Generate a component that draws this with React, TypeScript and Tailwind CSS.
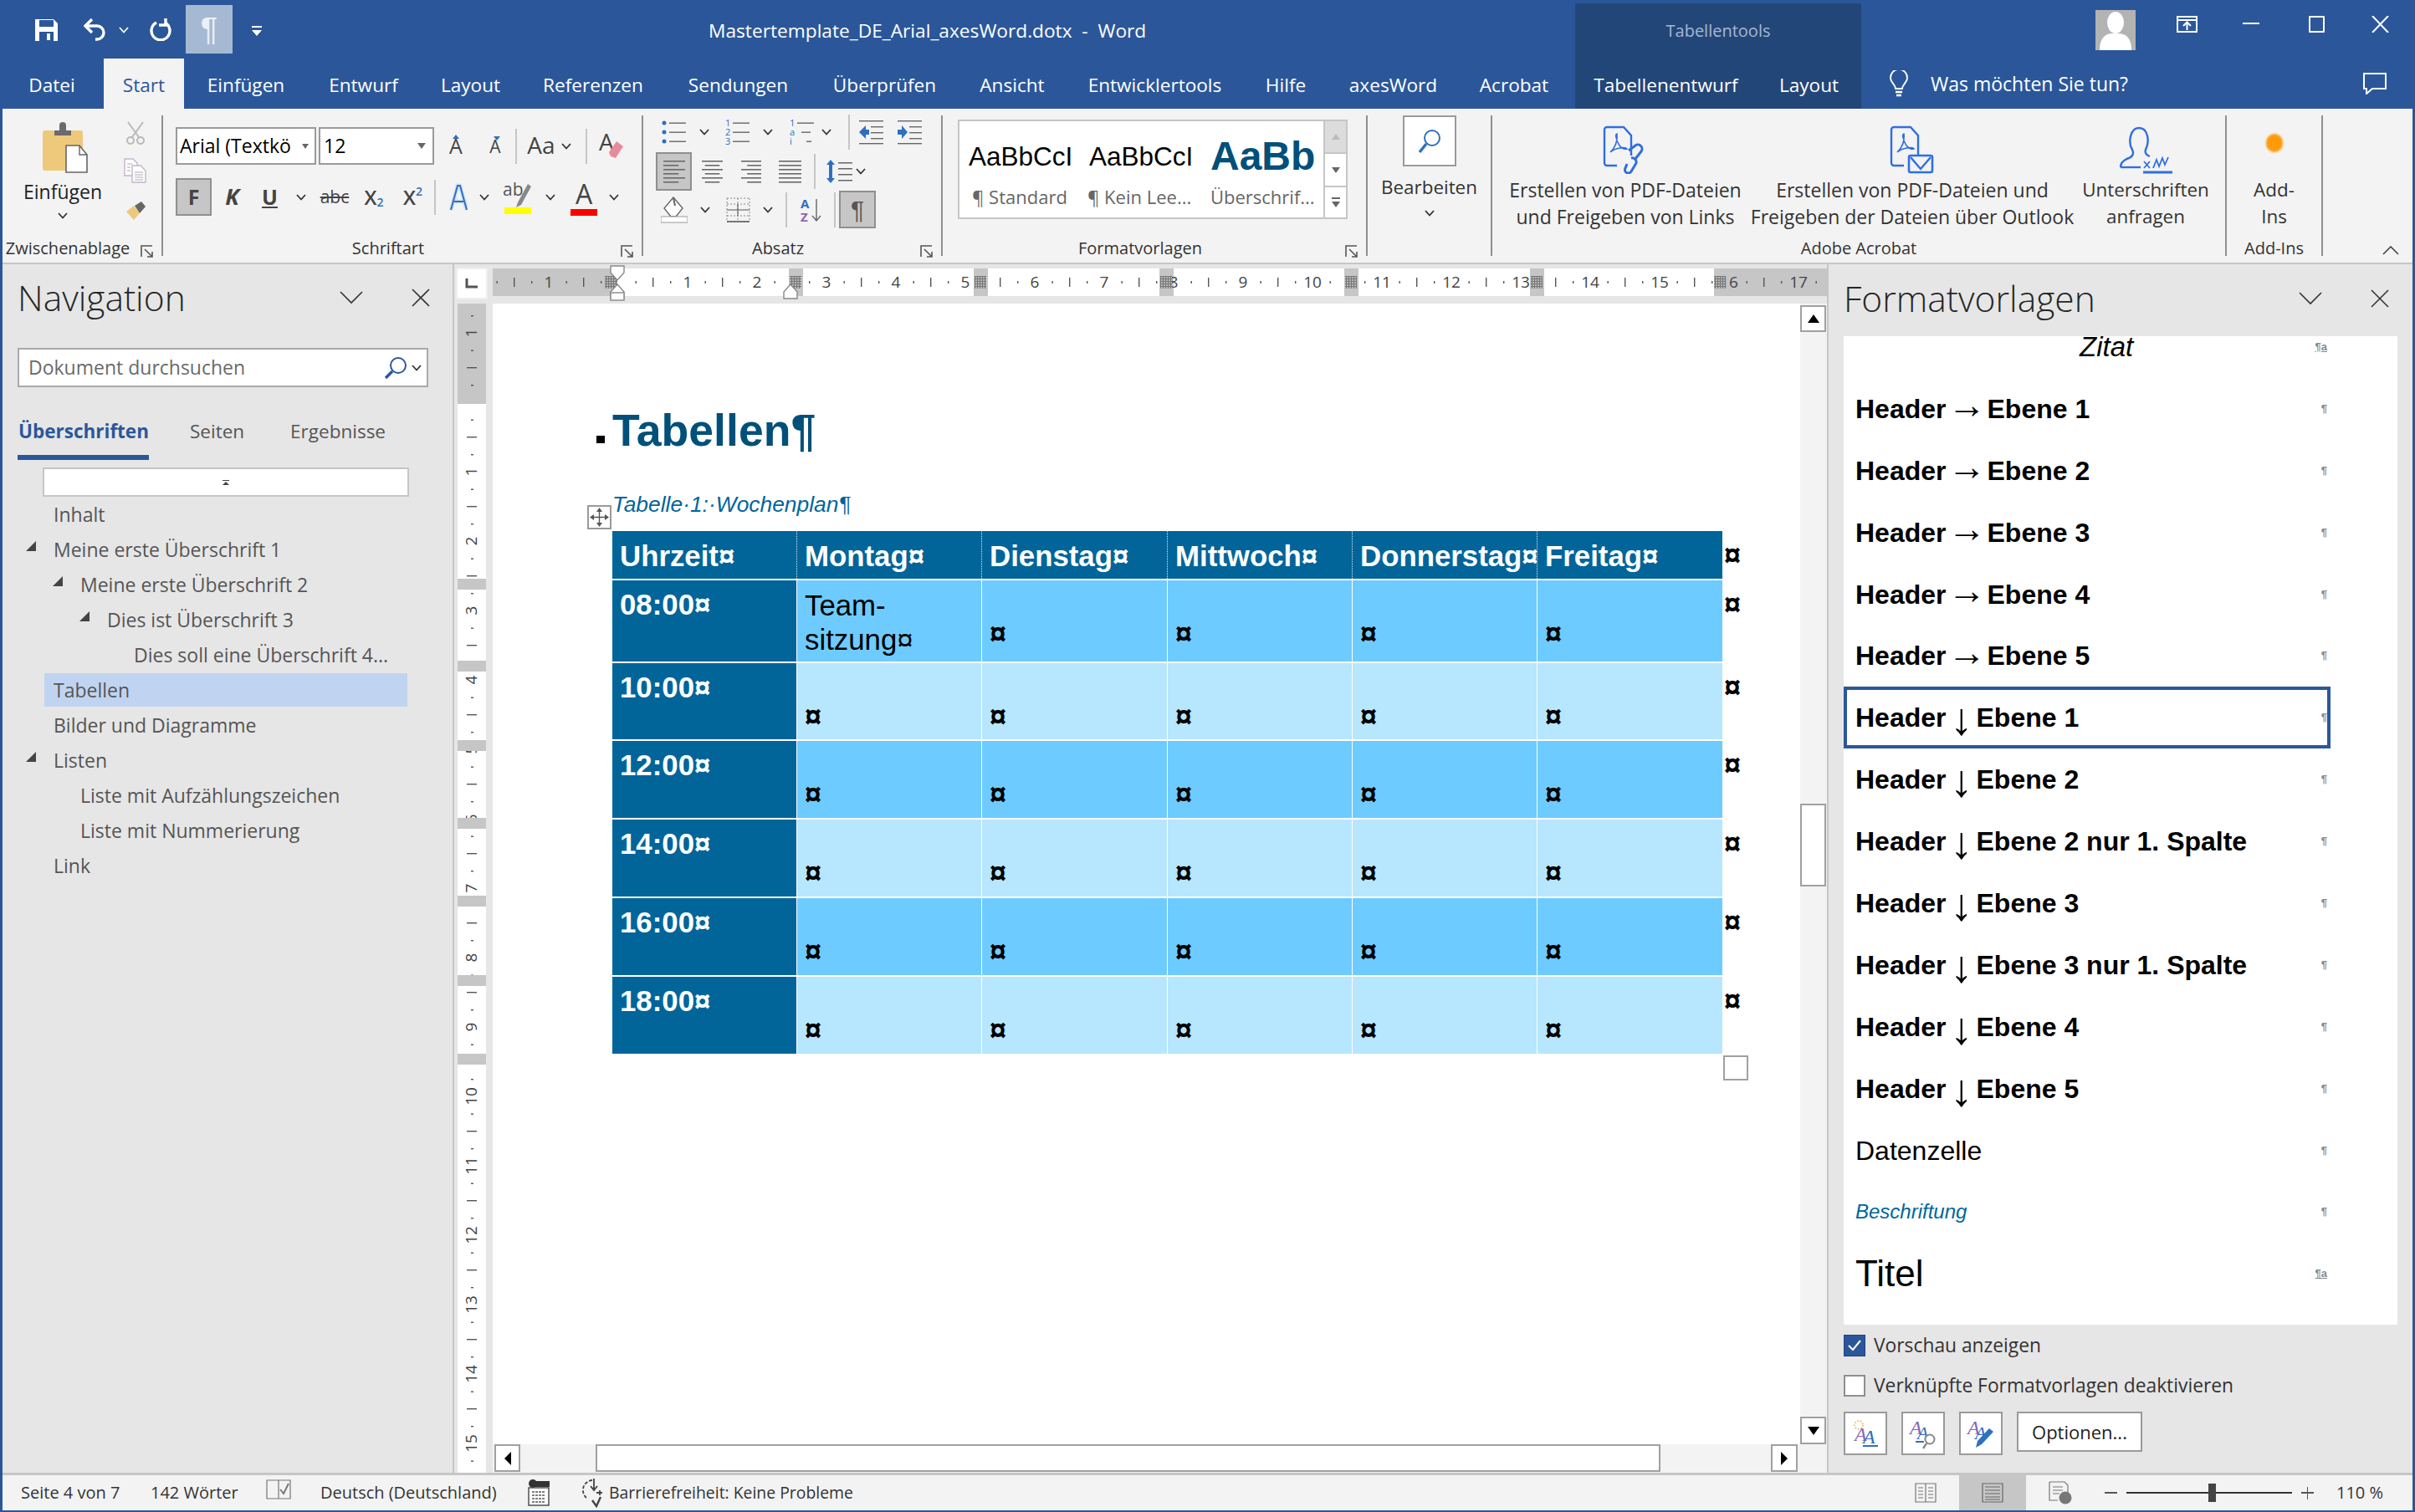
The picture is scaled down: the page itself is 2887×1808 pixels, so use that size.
import React from "react";

const BLUE = "#2b579a";

function Chev({ className = "" }: { className?: string }) {
  return (
    <svg className={`shrink-0 ${className}`} width="12" height="8" viewBox="0 0 12 8">
      <polyline points="1,1 6,6.5 11,1" fill="none" stroke="#333" strokeWidth="1.8" />
    </svg>
  );
}

function Launcher() {
  return (
    <svg width="16" height="16" viewBox="0 0 16 16">
      <path d="M1 14V1h13" fill="none" stroke="#555" strokeWidth="1.6" />
      <path d="M5 5l9 9M14 8v6H8" fill="none" stroke="#555" strokeWidth="1.6" />
    </svg>
  );
}

function Lines({ w, kind }: { w: number; kind: "l" | "c" | "r" | "j" }) {
  const rows = [0, 1, 2, 3, 4, 5];
  const sizes = [1, 0.7, 1, 0.7, 1, 0.7];
  return (
    <svg width={w} height="28" viewBox={`0 0 ${w} 28`}>
      {rows.map((r) => {
        const len = kind === "j" ? w : w * sizes[r];
        const x = kind === "l" || kind === "j" ? 0 : kind === "c" ? (w - len) / 2 : w - len;
        return <rect key={r} x={x} y={1 + r * 5} width={len} height="1.6" fill="#6a6a6a" />;
      })}
    </svg>
  );
}

function PdfIcon({ extra }: { extra: "link" | "mail" }) {
  return (
    <svg width="56" height="58" viewBox="0 0 56 58" fill="none" stroke="#2f6fe0" strokeWidth="2.4">
      <path d="M18 48H6a3 3 0 0 1-3-3V5a3 3 0 0 1 3-3h20l9 10v24" />
      <path d="M10 32c6-5 9-14 8-22-2 0-2 6 3 14 2 3 6 5 9 4-2-3-14-1-20 4z" strokeWidth="1.6" />
      {extra === "link" ? (
        <g strokeWidth="3">
          <path d="M32 30l8-6a5 5 0 0 1 7 7l-7 9" />
          <path d="M30 46l-2 5a4 4 0 0 0 7 4l6-10a5 5 0 0 0-6-6" />
        </g>
      ) : (
        <g>
          <rect x="24" y="36" width="28" height="20" rx="2" strokeWidth="2.6" />
          <path d="M26 38l12 14 12-14" />
        </g>
      )}
    </svg>
  );
}

function SignIcon() {
  return (
    <svg width="66" height="58" viewBox="0 0 66 58" fill="none" stroke="#2f6fe0" strokeWidth="2.4">
      <path d="M3 50c0-5 4-9 10-11 5-2 6-6 4-10-5-8-3-26 8-26s13 16 8 26c-1 3 0 6 5 8" />
      <path d="M3 50h24" />
      <path d="M31 43l7 8M38 43l-7 8M42 51l4-10 3 8 4-10 3 8 4-9" strokeWidth="1.8" />
      <path d="M30 56h35" strokeWidth="3" />
    </svg>
  );
}

function Paste() {
  return (
    <svg width="56" height="62" viewBox="0 0 56 62">
      <rect x="0" y="10" width="48" height="48" rx="3" fill="#eec97c" />
      <path d="M14 10h6V4a4 4 0 0 1 8 0v6h6v6H14z" fill="#6b6b6b" />
      <path d="M28 28h16l9 11v21H28z" fill="#fff" stroke="#666" strokeWidth="1.6" />
      <path d="M44 28v11h9" fill="none" stroke="#666" strokeWidth="1.4" />
    </svg>
  );
}

function Doc2() {
  return (
    <svg width="28" height="30" viewBox="0 0 28 30" fill="#fff" stroke="#c2b4d0" strokeWidth="1.4">
      <path d="M1 1h10l5 5v15H1z" />
      <path d="M10 9h10l6 6v14H10z" />
      <path d="M4 7h6M4 11h4M4 15h4M13 17h10M13 20h10M13 23h10M13 26h10" strokeWidth="1" stroke="#aaa" />
    </svg>
  );
}

function BigX() {
  return (
    <svg width="22" height="22" viewBox="0 0 22 22">
      <path d="M1 1l20 20M21 1L1 21" stroke="#333" strokeWidth="1.6" fill="none" />
    </svg>
  );
}

function BigChev() {
  return (
    <svg width="28" height="16" viewBox="0 0 28 16">
      <polyline points="1,1 14,14 27,1" fill="none" stroke="#333" strokeWidth="1.6" />
    </svg>
  );
}

function Tri() {
  return (
    <svg width="12" height="12" viewBox="0 0 12 12" className="shrink-0">
      <polygon points="12,0 12,12 0,12" fill="#444" />
    </svg>
  );
}

function Sep({ h, cls = "" }: { h: string; cls?: string }) {
  return <div className={`w-[2px] bg-[#c6c6c6] shrink-0 ${h} ${cls}`} />;
}

function GroupSep() {
  return <div className="w-[2px] h-[168px] mt-[8px] bg-[#8f8f8f] shrink-0" />;
}

function Group({ w, label, launcher, children }: { w: string; label: string; launcher?: boolean; children: React.ReactNode }) {
  return (
    <div className={`${w} shrink-0 flex flex-col h-full`}>
      <div className="h-[150px]">{children}</div>
      <div className="h-[34px] flex items-center text-[20px] text-[#333]">
        <div className="flex-1 text-center whitespace-nowrap">{label}</div>
        {launcher && (
          <div className="w-[34px] flex justify-center pt-[8px]">
            <Launcher />
          </div>
        )}
      </div>
    </div>
  );
}

function BigAction({ w, icon, lines, size }: { w: string; icon: React.ReactNode; lines: string[]; size: string }) {
  return (
    <div className={`${w} shrink-0 flex flex-col items-center pt-[20px]`}>
      <div className="h-[61px] flex items-start justify-center">{icon}</div>
      <div className={`text-center ${size} leading-[32px] text-[#333] whitespace-nowrap`}>
        {lines.map((l) => (
          <div key={l}>{l}</div>
        ))}
      </div>
    </div>
  );
}

function Clipboard() {
  return (
    <div className="flex">
      <div className="w-[144px] flex flex-col items-center pt-[16px]">
        <div className="ml-[8px]">
          <Paste />
        </div>
        <div className="text-[23px] text-[#222] mt-[6px] leading-[30px]">Einfügen</div>
        <Chev className="mt-[10px]" />
      </div>
      <div className="w-[30px] flex flex-col items-center pt-[15px]">
        <svg width="26" height="28" viewBox="0 0 26 28" fill="none" stroke="#b9b9b9" strokeWidth="2">
          <path d="M4 1l13 18M22 1L9 19" />
          <circle cx="7" cy="23" r="4" />
          <circle cx="19" cy="23" r="4" />
        </svg>
        <div className="mt-[16px]">
          <Doc2 />
        </div>
        <svg className="mt-[21px]" width="26" height="24" viewBox="0 0 26 24">
          <path d="M2 13l9-7 7 9-7 8z" fill="#eec97c" />
          <path d="M12 6l8-5 5 6-7 8z" fill="#666" />
        </svg>
      </div>
    </div>
  );
}

function FontGroup() {
  const slot = "flex items-center justify-center shrink-0";
  return (
    <div className="pl-[15px] pt-[22px] text-[#444]">
      <div className="flex items-center h-[45px]">
        <div className="w-[168px] h-[45px] border-2 border-[#9a9a9a] bg-white flex items-center justify-between pl-[3px] pr-[7px] text-[23px] text-black shrink-0">
          <span className="whitespace-nowrap">Arial (Textkö</span>
          <span className="w-0 h-0 border-x-[4px] border-x-transparent border-t-[6px] border-t-[#666] shrink-0 ml-[2px]" />
        </div>
        <div className="w-[138px] h-[45px] ml-[3px] border-2 border-[#9a9a9a] bg-white flex items-center justify-between pl-[4px] pr-[8px] text-[23px] text-black shrink-0">
          <span>12</span>
          <span className="w-0 h-0 border-x-[5px] border-x-transparent border-t-[7px] border-t-[#666]" />
        </div>
        <div className={`${slot} w-[52px] relative text-[25px]`}>
          A<span className="absolute top-[5px] left-[22px] w-0 h-0 border-x-[4px] border-x-transparent border-b-[5px] border-b-[#2f6fbf]" />
        </div>
        <div className={`${slot} w-[42px] relative text-[21px] pt-[2px]`}>
          A<span className="absolute top-[5px] left-[19px] w-0 h-0 border-x-[4px] border-x-transparent border-t-[5px] border-t-[#2f6fbf]" />
        </div>
        <div className={`${slot} w-[8px]`}><Sep h="h-[42px]" /></div>
        <div className={`${slot} w-[52px] text-[28px] pb-[4px]`}>Aa</div>
        <div className={`${slot} w-[8px]`}><Chev /></div>
        <div className="w-[16px] shrink-0" />
        <div className={`${slot} w-[8px]`}><Sep h="h-[42px]" /></div>
        <div className={`${slot} w-[52px]`}>
          <svg className="overflow-visible" width="30" height="34" viewBox="0 0 30 34">
            <text x="0" y="22" fontFamily="Open Sans" fontSize="28" fill="#444">A</text>
            <path d="M12 24l9-13 8 6-9 14-6-2z" fill="#e98a9b" />
          </svg>
        </div>
      </div>
      <div className="flex items-center h-[45px] mt-[16px]">
        <div className={`${slot} w-[43px] h-[45px] bg-[#c6c6c6] border-2 border-[#8f8f8f] text-[25px] font-bold text-[#444]`}>F</div>
        <div className={`${slot} w-[49px] text-[27px] font-bold italic`}>K</div>
        <div className={`${slot} w-[41px] text-[25px] font-bold underline`}>U</div>
        <div className={`${slot} w-[34px]`}><Chev /></div>
        <div className={`${slot} w-[46px] text-[21px] line-through`}>abc</div>
        <div className={`${slot} w-[48px] text-[24px] font-semibold`}>X<span className="text-[14px] text-[#2f6fbf] mt-[12px]">2</span></div>
        <div className={`${slot} w-[45px] text-[24px] font-semibold`}>X<span className="text-[14px] text-[#2f6fbf] mb-[14px]">2</span></div>
        <div className={`${slot} w-[8px]`}><Sep h="h-[42px]" /></div>
        <div className={`${slot} w-[48px]`}>
          <svg width="22" height="34" viewBox="0 0 22 34" fill="none">
            <path d="M2 32L10 3h3l8 29M6 22h11" stroke="#cfe2f8" strokeWidth="5" />
            <path d="M2 32L10 3h3l8 29M6 22h11" stroke="#2f6fbf" strokeWidth="2" />
          </svg>
        </div>
        <div className={`${slot} w-[14px]`}><Chev /></div>
        <div className={`${slot} w-[64px]`}>
          <svg className="overflow-visible" width="34" height="44" viewBox="0 0 34 44">
            <text x="0" y="20" fontFamily="Open Sans" fontSize="21" fill="#555">ab</text>
            <path d="M18 28l12-22 4 3-12 22-6 3z" fill="#888" />
            <rect x="2" y="34" width="32" height="8" fill="#ffff00" />
          </svg>
        </div>
        <div className={`${slot} w-[16px]`}><Chev /></div>
        <div className={`${slot} w-[64px] flex-col text-[32px]`}>
          <span className="leading-[36px]">A</span>
          <span className="w-[32px] h-[8px] bg-[#ff0000]" />
        </div>
        <div className={`${slot} w-[8px]`}><Chev /></div>
      </div>
    </div>
  );
}

function Bullets({ kind }: { kind: "b" | "n" | "m" }) {
  const c = "#2f6fbf";
  return (
    <svg width="30" height="30" viewBox="0 0 30 30" className="shrink-0 overflow-visible">
      {kind === "b" && (
        <g>
          <circle cx="3" cy="4" r="2.5" fill={c} />
          <circle cx="3" cy="15" r="2.5" fill={c} />
          <circle cx="3" cy="26" r="2.5" fill={c} />
        </g>
      )}
      {kind !== "b" && (
        <g fontFamily="Open Sans" fontSize="11" fill={c}>
          <text x="0" y="8">1</text>
          <text x="0" y="19">{kind === "n" ? "2" : "a"}</text>
          <text x="0" y="30">{kind === "n" ? "3" : "i"}</text>
        </g>
      )}
      <rect x="9" y="3.5" width="20" height="1.4" fill="#666" />
      <rect x={kind === "m" ? 14 : 9} y="14.5" width={kind === "m" ? 11 : 20} height="1.4" fill="#666" />
      <rect x={kind === "m" ? 20 : 9} y="25.5" width={kind === "m" ? 6 : 20} height="1.4" fill="#666" />
    </svg>
  );
}

function IndentIcon({ dir }: { dir: "l" | "r" }) {
  return (
    <svg width="29" height="30" viewBox="0 0 29 30" className="shrink-0">
      {[1, 8, 15, 22, 28].map((y) => (
        <rect key={y} x={y === 1 || y === 28 ? 0 : 14} y={y} width={y === 1 || y === 28 ? 29 : 15} height="1.4" fill="#666" />
      ))}
      {dir === "l" ? <path d="M0 15l8-8v5h4v6H8v5z" fill="#2f6fbf" /> : <path d="M12 15l-7-8v5H0v6h5v5z" fill="#2f6fbf" />}
    </svg>
  );
}

function Paragraph() {
  return (
    <div className="pt-[13px]">
      <div className="flex items-center h-[30px]">
        <div className="ml-[22px]"><Bullets kind="b" /></div>
        <Chev className="ml-[15px]" />
        <div className="ml-[19px]"><Bullets kind="n" /></div>
        <Chev className="ml-[15px]" />
        <div className="ml-[20px]"><Bullets kind="m" /></div>
        <Chev className="ml-[8px]" />
        <Sep h="h-[42px]" cls="ml-[20px]" />
        <div className="ml-[11px]"><IndentIcon dir="l" /></div>
        <div className="ml-[17px]"><IndentIcon dir="r" /></div>
      </div>
      <div className="flex items-center h-[46px] mt-[9px]">
        <div className="ml-[15px] w-[43px] h-[46px] bg-[#c6c6c6] border-2 border-[#8f8f8f] flex items-center justify-center shrink-0">
          <Lines w={26} kind="l" />
        </div>
        <div className="ml-[12px]"><Lines w={25} kind="c" /></div>
        <div className="ml-[22px]"><Lines w={24} kind="r" /></div>
        <div className="ml-[21px]"><Lines w={27} kind="j" /></div>
        <Sep h="h-[42px]" cls="ml-[15px]" />
        <svg className="ml-[12px] shrink-0" width="32" height="30" viewBox="0 0 32 30">
          <path d="M6 1l5 6H8v16h3l-5 6-5-6h3V7H1z" fill="#2f6fbf" />
          {[4, 11, 18, 25].map((y) => (
            <rect key={y} x="15" y={y} width="17" height="1.5" fill="#666" />
          ))}
        </svg>
        <Chev className="ml-[4px]" />
      </div>
      <div className="flex items-center h-[45px]">
        <svg className="ml-[21px] shrink-0" width="32" height="32" viewBox="0 0 32 32">
          <path d="M15 1l11 13-8 10H12L4 14z" fill="#fff" stroke="#666" strokeWidth="1.4" />
          <path d="M15 2l2 9" stroke="#666" strokeWidth="2" />
          <rect x="0" y="24" width="32" height="7" fill="#fff" stroke="#999" />
        </svg>
        <Chev className="ml-[15px]" />
        <svg className="ml-[19px] shrink-0" width="29" height="30" viewBox="0 0 29 30">
          <path d="M1 1h27M1 8h27M1 22h27M1 29h27M1 1v28M14 1v28M28 1v28" stroke="#888" strokeWidth="1" strokeDasharray="2 2" fill="none" />
          <path d="M1 15h27M14 8v14" stroke="#555" strokeWidth="1" />
          <path d="M1 29h27" stroke="#555" strokeWidth="1.5" />
        </svg>
        <Chev className="ml-[15px]" />
        <Sep h="h-[42px]" cls="ml-[15px]" />
        <svg className="ml-[16px] shrink-0 overflow-visible" width="26" height="30" viewBox="0 0 26 30">
          <text x="0" y="13" fontFamily="Open Sans" fontWeight="700" fontSize="15" fill="#2f6fbf">A</text>
          <text x="0" y="29" fontFamily="Open Sans" fontWeight="700" fontSize="15" fill="#8e63b8">Z</text>
          <path d="M19 2v26M14 22l5 6 5-6" stroke="#666" strokeWidth="1.4" fill="none" />
        </svg>
        <Sep h="h-[42px]" cls="ml-[14px]" />
        <div className="ml-[4px] w-[44px] h-[45px] bg-[#c6c6c6] border-2 border-[#8f8f8f] text-[30px] text-[#555] flex items-center justify-center shrink-0 font-['Liberation_Sans',sans-serif]">¶</div>
      </div>
    </div>
  );
}

function Gallery() {
  const sty = "font-['Liberation_Sans',Arial,sans-serif] text-black whitespace-nowrap overflow-hidden";
  return (
    <div className="ml-[18px] mt-[13px] w-[466px] h-[119px] border-2 border-[#c6c6c6] bg-white flex">
      <div className="flex-1 flex">
        <div className="w-[136px] flex flex-col pl-[11px] shrink-0">
          <div className={`${sty} h-[72px] pt-[12px] leading-[60px] text-[31.5px]`}>AaBbCcI</div>
          <div className="text-[22px] text-[#666] pl-[4px] mt-[2px] whitespace-nowrap">¶ Standard</div>
        </div>
        <div className="w-[144px] flex flex-col pl-[19px] shrink-0">
          <div className={`${sty} h-[72px] pt-[12px] leading-[60px] text-[31.5px]`}>AaBbCcI</div>
          <div className="text-[22px] text-[#666] -ml-[2px] mt-[2px] whitespace-nowrap">¶ Kein Lee...</div>
        </div>
        <div className="flex-1 flex flex-col pl-[20px]">
          <div className={`${sty} h-[72px] pt-[12px] leading-[60px] text-[48px] font-bold !text-[#00507a]`}>AaBb</div>
          <div className="text-[22px] text-[#666] mt-[2px] whitespace-nowrap">Überschrif...</div>
        </div>
      </div>
      <div className="w-[29px] flex flex-col shrink-0 -mt-[2px] -mb-[2px] -mr-[2px]">
        <div className="h-[41px] bg-[#dcdcdc] border-2 border-[#c6c6c6] flex items-center justify-center">
          <span className="w-0 h-0 border-x-[5px] border-x-transparent border-b-[7px] border-b-[#bbb]" />
        </div>
        <div className="h-[38px] bg-white border-x-2 border-[#c6c6c6] flex items-center justify-center">
          <span className="w-0 h-0 border-x-[5px] border-x-transparent border-t-[7px] border-t-[#666]" />
        </div>
        <div className="h-[40px] bg-white border-2 border-[#c6c6c6] flex flex-col items-center justify-center gap-[3px]">
          <span className="w-[10px] h-[1.5px] bg-[#666]" />
          <span className="w-0 h-0 border-x-[5px] border-x-transparent border-t-[7px] border-t-[#666]" />
        </div>
      </div>
    </div>
  );
}

function Ribbon() {
  return (
    <div className="h-[184px] mx-[3px] bg-[#f3f3f3] flex shrink-0">
      <Group w="w-[190px]" label="Zwischenablage" launcher>
        <Clipboard />
      </Group>
      <GroupSep />
      <Group w="w-[572px]" label="Schriftart" launcher>
        <FontGroup />
      </Group>
      <GroupSep />
      <Group w="w-[356px]" label="Absatz" launcher>
        <Paragraph />
      </Group>
      <GroupSep />
      <Group w="w-[506px]" label="Formatvorlagen" launcher>
        <Gallery />
      </Group>
      <GroupSep />
      <Group w="w-[147px]" label="">
        <div className="flex flex-col items-center pt-[8px]">
          <div className="w-[64px] h-[61px] border-2 border-[#9a9a9a] bg-white flex items-center justify-center">
            <svg width="28" height="30" viewBox="0 0 28 30" fill="none" stroke="#2f6fbf">
              <circle cx="17" cy="11" r="9" strokeWidth="2" />
              <path d="M10 18L2 28" strokeWidth="3.4" />
            </svg>
          </div>
          <div className="text-[22.4px] text-[#333] leading-[32px] mt-[9px]">Bearbeiten</div>
          <Chev className="mt-[11px]" />
        </div>
      </Group>
      <GroupSep />
      <Group w="w-[876px]" label="Adobe Acrobat">
        <div className="flex">
          <BigAction w="w-[318px]" size="text-[23px]" icon={<PdfIcon extra="link" />} lines={["Erstellen von PDF-Dateien", "und Freigeben von Links"]} />
          <BigAction w="w-[368px]" size="text-[23px]" icon={<PdfIcon extra="mail" />} lines={["Erstellen von PDF-Dateien und", "Freigeben der Dateien über Outlook"]} />
          <BigAction w="w-[190px]" size="text-[22.4px]" icon={<SignIcon />} lines={["Unterschriften", "anfragen"]} />
        </div>
      </Group>
      <GroupSep />
      <Group w="w-[113px]" label="Add-Ins">
        <div className="flex flex-col items-center pt-[30px]">
          <div className="w-[20px] h-[22px] rounded-full bg-[#ff9a0a] blur-[1px]" />
          <div className="text-center text-[22.4px] leading-[32px] text-[#333] mt-[29px]">
            <div>Add-</div>
            <div>Ins</div>
          </div>
        </div>
      </Group>
      <GroupSep />
      <div className="flex-1 flex items-end justify-end pb-[9px] pr-[16px]">
        <svg width="20" height="11" viewBox="0 0 20 11">
          <polyline points="1,10 10,1 19,10" fill="none" stroke="#444" strokeWidth="1.6" />
        </svg>
      </div>
    </div>
  );
}

function TitleBar() {
  return (
    <div className="h-[70px] flex text-white shrink-0">
      <svg className="ml-[42px] mt-[23px] shrink-0" width="27" height="26" viewBox="0 0 27 26">
        <path d="M0 0h22l5 5v21H0z" fill="#fff" />
        <rect x="5" y="1" width="17" height="8" fill={BLUE} />
        <rect x="5" y="15" width="17" height="11" fill={BLUE} />
        <rect x="14" y="17" width="4" height="8" fill="#fff" />
      </svg>
      <svg className="ml-[31px] mt-[22px] shrink-0" width="26" height="27" viewBox="0 0 26 27" fill="none" stroke="#fff" strokeWidth="3.4">
        <path d="M2 9h14a8 8 0 0 1 0 16h-2" />
        <path d="M10 1L2 9l8 8" />
      </svg>
      <Chev className="ml-[16px] mt-[32px] [&_polyline]:stroke-white" />
      <svg className="ml-[25px] mt-[22px] shrink-0" width="26" height="27" viewBox="0 0 26 27" fill="none" stroke="#fff" strokeWidth="3.4">
        <path d="M8 5a11 11 0 1 0 10 0" />
        <path d="M19 0v8h-8" />
      </svg>
      <div className="ml-[17px] mt-[6px] w-[56px] h-[58px] bg-[#a6b9d3] flex items-center justify-center text-[38px] text-white/80 font-['Liberation_Sans',sans-serif] shrink-0">¶</div>
      <div className="ml-[22px] mt-[31px] w-[14px] flex flex-col items-center gap-[3px] shrink-0">
        <span className="w-[12px] h-[2px] bg-white" />
        <span className="w-0 h-0 border-x-[6px] border-x-transparent border-t-[7px] border-t-white" />
      </div>
      <div className="ml-[533px] w-[525px] h-[70px] shrink-0 text-[22.7px] leading-[66px] pt-[4px] whitespace-pre">Mastertemplate_DE_Arial_axesWord.dotx  -  Word</div>
      <div className="ml-[511px] mt-[4px] w-[342px] h-[66px] bg-[#234678] text-[#a5b8d2] text-[20px] text-center leading-[66px] shrink-0">Tabellentools</div>
      <div className="ml-[280px] mt-[12px] w-[48px] h-[48px] bg-[#b3b3b3] overflow-hidden shrink-0">
        <svg width="48" height="48" viewBox="0 0 48 48">
          <ellipse cx="24" cy="15" rx="10" ry="13" fill="#fff" />
          <path d="M5 48c0-14 6-19 14-20h10c8 1 14 6 14 20z" fill="#fff" />
        </svg>
      </div>
      <svg className="ml-[49px] mt-[19px] shrink-0" width="25" height="20" viewBox="0 0 25 20" fill="none" stroke="#fff" strokeWidth="2">
        <rect x="1" y="1" width="23" height="18" />
        <path d="M1 5h23M12.5 17V8M8 12l4.5-4.5L17 12" />
      </svg>
      <div className="ml-[54px] mt-[27px] w-[20px] h-[2px] bg-white shrink-0" />
      <div className="ml-[59px] mt-[19px] w-[19px] h-[20px] border-2 border-white shrink-0 rounded-[1px]" />
      <svg className="ml-[56px] mt-[19px] shrink-0" width="21" height="20" viewBox="0 0 21 20">
        <path d="M1 0l19 20M20 0L1 20" stroke="#fff" strokeWidth="2" />
      </svg>
    </div>
  );
}

function Tab({ w, label, active, ctx }: { w: string; label: string; active?: boolean; ctx?: boolean }) {
  return (
    <div className={`${w} h-[60px] shrink-0 text-center leading-[56px] pt-[3.5px] whitespace-nowrap ${active ? "bg-[#f3f3f3] text-[#2b579a]" : ctx ? "bg-[#234678] text-white" : "text-white"}`}>
      {label}
    </div>
  );
}

function TabsRow() {
  return (
    <div className="h-[60px] flex text-[22.6px] shrink-0">
      <Tab w="w-[124px]" label="Datei" />
      <Tab w="w-[96px]" label="Start" active />
      <Tab w="w-[148px]" label="Einfügen" />
      <Tab w="w-[133px]" label="Entwurf" />
      <Tab w="w-[123px]" label="Layout" />
      <Tab w="w-[170px]" label="Referenzen" />
      <Tab w="w-[177px]" label="Sendungen" />
      <Tab w="w-[173px]" label="Überprüfen" />
      <Tab w="w-[132px]" label="Ansicht" />
      <Tab w="w-[209px]" label="Entwicklertools" />
      <Tab w="w-[104px]" label="Hilfe" />
      <Tab w="w-[153px]" label="axesWord" />
      <Tab w="w-[136px]" label="Acrobat" />
      <div className="w-[5px] shrink-0" />
      <Tab w="w-[217px]" label="Tabellenentwurf" ctx />
      <Tab w="w-[125px]" label="Layout" ctx />
      <svg className="ml-[34px] mt-[14px] shrink-0" width="22" height="32" viewBox="0 0 22 32" fill="none" stroke="#fff" strokeWidth="1.8">
        <path d="M7 22c0-5-6-7-6-13a10 10 0 0 1 20 0c0 6-6 8-6 13z" />
        <path d="M7 26h8M8 30h6" strokeWidth="2.4" />
      </svg>
      <div className="ml-[27px] text-white text-[23px] leading-[60px] whitespace-nowrap w-[238px] shrink-0">Was möchten Sie tun?</div>
      <svg className="ml-[279px] mt-[17px] shrink-0" width="28" height="26" viewBox="0 0 28 26" fill="none" stroke="#fff" strokeWidth="2">
        <path d="M1 1h26v18H11l-7 6v-6H1z" />
      </svg>
    </div>
  );
}

const treeRows: { t: string; lvl: string; tri?: boolean; triMl?: string; active?: boolean }[] = [
  { t: "Inhalt", lvl: "pl-[61px]" },
  { t: "Meine erste Überschrift 1", lvl: "pl-[61px]", tri: true, triMl: "left-[28px]" },
  { t: "Meine erste Überschrift 2", lvl: "pl-[93px]", tri: true, triMl: "left-[60px]" },
  { t: "Dies ist Überschrift 3", lvl: "pl-[125px]", tri: true, triMl: "left-[92px]" },
  { t: "Dies soll eine Überschrift 4...", lvl: "pl-[157px]" },
  { t: "Tabellen", lvl: "pl-[61px]", active: true },
  { t: "Bilder und Diagramme", lvl: "pl-[61px]" },
  { t: "Listen", lvl: "pl-[61px]", tri: true, triMl: "left-[28px]" },
  { t: "Liste mit Aufzählungszeichen", lvl: "pl-[93px]" },
  { t: "Liste mit Nummerierung", lvl: "pl-[93px]" },
  { t: "Link", lvl: "pl-[61px]" },
];

function NavPanel() {
  return (
    <div className="w-[538px] shrink-0 bg-[#e6e6e6] flex flex-col">
      <div className="h-[84px] pl-[18px] flex items-center shrink-0 pb-[4px]">
        <div className="text-[42.5px] font-light text-[#262626] leading-[60px] w-[385px] whitespace-nowrap">Navigation</div>
        <BigChev />
        <div className="ml-[58px]"><BigX /></div>
      </div>
      <div className="ml-[18px] mt-[16px] w-[491px] h-[47px] bg-white border-2 border-[#a9a9a9] flex items-center pl-[11px] pr-[6px] shrink-0">
        <span className="flex-1 text-[23px] text-[#6a6a6a] whitespace-nowrap">Dokument durchsuchen</span>
        <svg width="28" height="28" viewBox="0 0 28 28" fill="none" stroke="#2b579a">
          <circle cx="17" cy="11" r="9" strokeWidth="2" />
          <path d="M10 18L2 26" strokeWidth="3.4" />
        </svg>
        <Chev className="ml-[5px]" />
      </div>
      <div className="ml-[18px] mt-[30px] flex text-[22.5px] text-[#555] h-[57px] shrink-0 items-start">
        <div className="w-[157px] h-[57px] border-b-[6px] border-[#2b579a] font-bold text-[#2b579a] pl-[1px] leading-[45px] whitespace-nowrap">Überschriften</div>
        <div className="ml-[49px] leading-[45px]">Seiten</div>
        <div className="ml-[55px] leading-[45px]">Ergebnisse</div>
      </div>
      <div className="ml-[48px] mt-[9px] w-[438px] h-[35px] bg-white border-2 border-[#c6c6c6] flex flex-col items-center justify-center gap-[1px] shrink-0">
        <span className="w-[8px] h-[1px] bg-[#444]" />
        <span className="w-0 h-0 border-x-[4px] border-x-transparent border-b-[4px] border-b-[#444]" />
      </div>
      <div className="flex flex-col text-[23px] text-[#555]">
        {treeRows.map((r) => (
          <div key={r.t} className={`relative h-[42px] flex items-center whitespace-nowrap ${r.lvl}`}>
            {r.active && <div className="absolute left-[50px] w-[434px] h-[40px] bg-[#c0d4f1]" />}
            {r.tri && (
              <div className={`absolute ${r.triMl} top-[11px]`}>
                <Tri />
              </div>
            )}
            <span className="relative">{r.t}</span>
          </div>
        ))}
      </div>
    </div>
  );
}

const H_NUMS = [-1, 1, 2, 3, 4, 5, 6, 7, 8, 9, 10, 11, 12, 13, 14, 15, 16, 17];
const H_MARKS = [943, 1164, 1386, 1607, 1829];

function HRuler() {
  const ox = 589;
  const x0 = 739 - ox;
  const ticks: React.ReactNode[] = [];
  for (let n = -2; n < 18; n++) {
    const p = x0 + 83 * n;
    ticks.push(<rect key={`h${n}`} x={p + 41} y="11" width="1.4" height="11" fill="#555" />);
    ticks.push(<rect key={`q${n}`} x={p + 20.5} y="15" width="1.4" height="3" fill="#555" />);
    ticks.push(<rect key={`r${n}`} x={p + 62} y="15" width="1.4" height="3" fill="#555" />);
  }
  return (
    <svg width="1596" height="33" viewBox="0 0 1596 33" className="overflow-visible shrink-0">
      <defs>
        <pattern id="hatch" width="3" height="3" patternUnits="userSpaceOnUse">
          <rect width="3" height="3" fill="#b5b5b5" />
          <rect width="1" height="3" fill="#777" />
          <rect width="3" height="1" fill="#777" />
        </pattern>
      </defs>
      <rect width="1596" height="33" fill="#fff" />
      <rect width={738 - ox} height="33" fill="#c6c6c6" />
      <rect x={2049 - ox} width={2185 - 2049} height="33" fill="#c6c6c6" />
      {ticks}
      {H_MARKS.map((m) => (
        <g key={m}>
          <rect x={m - ox - 2} width="22" height="33" fill="#fff" />
          <rect x={m - ox} width="17" height="33" fill="#c6c6c6" />
        </g>
      ))}
      {H_NUMS.map((n) => (
        <text key={n} x={x0 + 83 * n} y="23" textAnchor="middle" fontFamily="Open Sans" fontSize="19" fill="#444">
          {Math.abs(n)}
        </text>
      ))}
      {H_MARKS.map((m) => (
        <rect key={m} x={m - ox + 1} y="9" width="14" height="15" fill="url(#hatch)" />
      ))}
      <rect x={723 - ox} y="9" width="15" height="15" fill="url(#hatch)" />
      <rect x={2049 - ox} y="9" width="14" height="15" fill="url(#hatch)" />
      <g fill="#fff" stroke="#888" strokeWidth="1.4">
        <path d={`M${730 - ox} -3h16v8l-8 9-8-9z`} />
        <path d={`M${738 - ox} 19l8 9v8h-16v-8z`} />
        <rect x={730 - ox} y="29" width="16" height="9" />
        <path d={`M${945 - ox} 19l8 9v8h-16v-8z`} />
      </g>
    </svg>
  );
}

function VRuler() {
  const marks = [692, 790, 885, 978, 1071, 1166, 1260];
  const ticks: React.ReactNode[] = [];
  const y0 = 481 - 363;
  for (let n = -2; n < 16; n++) {
    const p = y0 + 83 * n;
    ticks.push(<rect key={`h${n}`} x="11" y={p + 41} width="12" height="1.4" fill="#555" />);
    ticks.push(<rect key={`q${n}`} x="16" y={p + 20.5} width="3" height="1.4" fill="#555" />);
    ticks.push(<rect key={`r${n}`} x="16" y={p + 62} width="3" height="1.4" fill="#555" />);
  }
  const nums = [-1, 1, 2, 3, 4, 5, 6, 7, 8, 9, 10, 11, 12, 13, 14, 15];
  return (
    <svg width="34" height="1399" viewBox="0 0 34 1399" className="shrink-0">
      <rect width="34" height="1399" fill="#fff" />
      <rect width="34" height="120" fill="#c6c6c6" />
      {ticks}
      {nums.map((n) => (
        <text key={n} x="0" y="0" textAnchor="middle" fontFamily="Open Sans" fontSize="19" fill="#444" transform={`translate(23,${y0 + 83 * n}) rotate(-90)`}>
          {Math.abs(n)}
        </text>
      ))}
      {marks.map((m) => (
        <rect key={m} y={m - 363} width="34" height="13" fill="#c6c6c6" />
      ))}
    </svg>
  );
}

const arial = "font-['Liberation_Sans',Arial,sans-serif]";
const TIMES = ["08:00", "10:00", "12:00", "14:00", "16:00", "18:00"];
const HEAD = ["Uhrzeit", "Montag", "Dienstag", "Mittwoch", "Donnerstag", "Freitag"];

function RowEnd() {
  return <div className="text-[36px] font-bold leading-[40px] pt-[9px] pl-[1px] text-black">¤</div>;
}

function DocTable() {
  return (
    <div className={`relative ${arial} w-[1368px] grid grid-cols-[220px_220px_221px_220px_220px_221px_40px] grid-rows-[57px_97px_91px_92px_92px_92px_92px] gap-x-[1px] gap-y-[2px] mt-[16px] text-[34.8px]`}>
      {HEAD.map((h, i) => (
        <div key={h} className={`bg-[#02659a] text-white font-bold pl-[9px] leading-[59px] whitespace-nowrap ${i < 5 ? "-mr-[1px] border-r border-dotted border-[#d8e8f2]" : ""}`}>
          {h}¤
        </div>
      ))}
      <RowEnd />
      {TIMES.map((t, i) => {
        const bg = i % 2 === 0 ? "bg-[#6ecbff]" : "bg-[#b7e6ff]";
        return (
          <React.Fragment key={t}>
            <div className="bg-[#02659a] text-white font-bold pl-[9px] pt-[9px] leading-[40px]">{t}¤</div>
            {[0, 1, 2, 3, 4].map((c) => (
              <div key={c} className={`${bg} pl-[9px] text-black`}>
                {i === 0 && c === 0 ? (
                  <div className="pt-[9px] leading-[41px]">
                    Team-
                    <br />
                    sitzung¤
                  </div>
                ) : (
                  <div className="pt-[43px] leading-[41px] text-[36px] font-bold">¤</div>
                )}
              </div>
            ))}
            <RowEnd />
          </React.Fragment>
        );
      })}
    </div>
  );
}

function ScrollBtn({ dir, cls }: { dir: "u" | "d" | "l" | "r"; cls: string }) {
  const arrow =
    dir === "u"
      ? "border-x-[7px] border-x-transparent border-b-[10px] border-b-black"
      : dir === "d"
        ? "border-x-[7px] border-x-transparent border-t-[10px] border-t-black"
        : dir === "l"
          ? "border-y-[8px] border-y-transparent border-r-[8px] border-r-black"
          : "border-y-[8px] border-y-transparent border-l-[8px] border-l-black";
  return (
    <div className={`bg-white border-2 border-[#a0a0a0] flex items-center justify-center shrink-0 ${cls}`}>
      <span className={`w-0 h-0 ${arrow}`} />
    </div>
  );
}

function DocArea() {
  return (
    <div className="flex-1 flex flex-col min-w-0">
      <div className="flex-1 flex min-h-0">
        <div className="flex-1 bg-white pl-[143px] pt-[121px] relative min-w-0">
          <div className={`${arial} flex items-start`}>
            <span className="w-[10px] h-[9px] bg-black -ml-[19px] mt-[37px] mr-[9px] shrink-0" />
            <span className="text-[53.6px] font-bold text-[#00507a] leading-[60px] whitespace-nowrap">Tabellen¶</span>
          </div>
          <div className={`${arial} mt-[43px] italic text-[26.4px] leading-[32px] text-[#00659c] whitespace-nowrap`}>Tabelle·1:·Wochenplan¶</div>
          <DocTable />
          <div className="absolute left-[113px] top-[241px] w-[29px] h-[29px] border-2 border-[#9a9a9a] bg-white flex items-center justify-center">
            <svg width="23" height="23" viewBox="0 0 23 23">
              <path d="M11.5 3v17M3 11.5h17" stroke="#555" strokeWidth="1.4" fill="none" />
              <path d="M11.5 0l3.5 5H8zM11.5 23L8 18h7zM0 11.500L5 8v7zM23 11.500L18 15V8z" fill="#555" />
            </svg>
          </div>
          <div className="absolute left-[1471px] top-[899px] w-[30px] h-[30px] border-2 border-[#a0a0a0] bg-white" />
        </div>
        <div className="w-[32px] bg-[#f3f3f3] flex flex-col pt-[2px] pr-[1px] shrink-0">
          <ScrollBtn dir="u" cls="h-[32px]" />
          <div className="mt-[564px] h-[99px] bg-white border-2 border-[#a0a0a0] shrink-0" />
          <div className="flex-1" />
          <ScrollBtn dir="d" cls="h-[33px]" />
        </div>
      </div>
      <div className="h-[34px] bg-[#f3f3f3] flex pl-[2px] shrink-0">
        <ScrollBtn dir="l" cls="w-[31px] h-[33px]" />
        <div className="ml-[90px] w-[1273px] h-[33px] bg-white border-2 border-[#a0a0a0] shrink-0" />
        <div className="ml-[132px]">
          <ScrollBtn dir="r" cls="w-[32px] h-[33px]" />
        </div>
      </div>
    </div>
  );
}

const STYLES: { pre: string; arrow: "→" | "↓"; post: string; sel?: boolean }[] = [
  { pre: "Header", arrow: "→", post: "Ebene 1" },
  { pre: "Header", arrow: "→", post: "Ebene 2" },
  { pre: "Header", arrow: "→", post: "Ebene 3" },
  { pre: "Header", arrow: "→", post: "Ebene 4" },
  { pre: "Header", arrow: "→", post: "Ebene 5" },
  { pre: "Header", arrow: "↓", post: "Ebene 1", sel: true },
  { pre: "Header", arrow: "↓", post: "Ebene 2" },
  { pre: "Header", arrow: "↓", post: "Ebene 2 nur 1. Spalte" },
  { pre: "Header", arrow: "↓", post: "Ebene 3" },
  { pre: "Header", arrow: "↓", post: "Ebene 3 nur 1. Spalte" },
  { pre: "Header", arrow: "↓", post: "Ebene 4" },
  { pre: "Header", arrow: "↓", post: "Ebene 5" },
];

function Marker({ linked }: { linked?: boolean }) {
  return (
    <span className={`ml-auto text-[13px] leading-[14px] font-bold text-[#888] not-italic ${linked ? "underline" : ""} ${arial}`}>
      {linked ? "¶a" : "¶"}
    </span>
  );
}

function StylePanel() {
  const row = "w-[582px] h-[73.9px] flex items-center pl-[14px] pr-[4px] whitespace-nowrap shrink-0";
  return (
    <div className="w-[700px] shrink-0 bg-[#e6e6e6] flex flex-col pl-[18px] border-l-2 border-[#c6c6c6]">
      <div className="h-[86px] flex items-center shrink-0 pb-[4px]">
        <div className="text-[42.5px] font-light text-[#262626] leading-[60px] w-[544px] whitespace-nowrap">Formatvorlagen</div>
        <BigChev />
        <div className="ml-[58px]"><BigX /></div>
      </div>
      <div className={`w-[662px] h-[1182px] bg-white overflow-hidden shrink-0 ${arial} text-[32px] text-black`}>
        <div className="-mt-[24px] flex flex-col">
          <div className={`${row} italic`}>
            <span className="ml-[268px] text-[33px]">Zitat</span>
            <Marker linked />
          </div>
          {STYLES.map((s) => (
            <div key={s.post + s.arrow} className={`${row} font-bold ${s.sel ? "border-[4px] !pl-[10px] !pr-[0px] border-[#2b579a]" : ""}`}>
              <span>{s.pre}</span>
              <span className="w-[9px]" />
              <span className={`inline-flex justify-center ${arial} font-normal leading-none ${s.arrow === "→" ? "w-[32px] text-[46px] pb-[9px]" : "w-[19px] text-[54px] pt-[2px]"}`}>{s.arrow}</span>
              <span className="w-[8px]" />
              <span>{s.post}</span>
              <Marker />
            </div>
          ))}
          <div className={row}>
            <span>Datenzelle</span>
            <Marker />
          </div>
          <div className={`${row} italic`}>
            <span className="text-[24px] text-[#00659c]">Beschriftung</span>
            <Marker />
          </div>
          <div className={row}>
            <span className="text-[44px]">Titel</span>
            <Marker linked />
          </div>
        </div>
      </div>
      <div className="flex items-center mt-[12px] h-[26px] text-[22.8px] text-[#333]">
        <div className="w-[26px] h-[26px] bg-[#2b579a] border border-[#1f4480] flex items-center justify-center shrink-0">
          <svg width="16" height="14" viewBox="0 0 16 14">
            <path d="M1 7l5 5L15 1" stroke="#fff" strokeWidth="2" fill="none" />
          </svg>
        </div>
        <span className="ml-[10px] whitespace-nowrap">Vorschau anzeigen</span>
      </div>
      <div className="flex items-center mt-[22px] h-[26px] text-[22.8px] text-[#333]">
        <div className="w-[26px] h-[26px] bg-white border-2 border-[#8f8f8f] shrink-0" />
        <span className="ml-[10px] whitespace-nowrap">Verknüpfte Formatvorlagen deaktivieren</span>
      </div>
      <div className="flex mt-[18px] items-start">
        <div className="w-[52px] h-[52px] bg-white border-2 border-[#9a9a9a] flex items-center justify-center shrink-0">
          <svg className="overflow-visible" width="30" height="36" viewBox="0 0 30 36">
            <circle cx="7" cy="8" r="5" fill="none" stroke="#eec97c" strokeWidth="2" strokeDasharray="2 1.500" />
            <text x="2" y="27" fontFamily="Liberation Serif" fontStyle="italic" fontSize="24" fill="#8e63b8">A</text>
            <text x="12" y="30" fontFamily="Liberation Serif" fontStyle="italic" fontSize="24" fill="#2f6fbf">A</text>
            <rect x="12" y="32" width="18" height="2" fill="#2f6fbf" />
          </svg>
        </div>
        <div className="ml-[17px] w-[52px] h-[52px] bg-white border-2 border-[#9a9a9a] flex items-center justify-center shrink-0">
          <svg className="overflow-visible" width="32" height="38" viewBox="0 0 32 38">
            <text x="0" y="20" fontFamily="Liberation Serif" fontStyle="italic" fontSize="24" fill="#8e63b8">A</text>
            <text x="9" y="26" fontFamily="Liberation Serif" fontStyle="italic" fontSize="22" fill="#2f6fbf">A</text>
            <rect x="7" y="28" width="10" height="2" fill="#2f6fbf" />
            <circle cx="24" cy="26" r="5.500" fill="#fff" stroke="#888" strokeWidth="2" />
            <path d="M20 31l-4 6" stroke="#888" strokeWidth="2.400" />
          </svg>
        </div>
        <div className="ml-[17px] w-[52px] h-[52px] bg-white border-2 border-[#9a9a9a] flex items-center justify-center shrink-0">
          <svg className="overflow-visible" width="32" height="38" viewBox="0 0 32 38">
            <text x="0" y="20" fontFamily="Liberation Serif" fontStyle="italic" fontSize="24" fill="#8e63b8">A</text>
            <text x="9" y="26" fontFamily="Liberation Serif" fontStyle="italic" fontSize="22" fill="#2f6fbf">A</text>
            <path d="M10 36l2-8 14-15 5 4-14 15z" fill="#2f6fbf" />
          </svg>
        </div>
        <div className="ml-[17px] w-[150px] h-[48px] bg-white border-2 border-[#9a9a9a] flex items-center justify-center text-[22px] text-[#222] shrink-0">Optionen...</div>
      </div>
    </div>
  );
}

function StatusBar() {
  return (
    <div className="h-[42px] mx-[3px] mb-[2px] bg-[#f3f3f3] flex items-center text-[20px] text-[#333] shrink-0 whitespace-nowrap">
      <span className="ml-[22px] w-[118px] shrink-0">Seite 4 von 7</span>
      <span className="ml-[37px] w-[102px] shrink-0">142 Wörter</span>
      <svg className="ml-[36px] mb-[6px] shrink-0" width="30" height="26" viewBox="0 0 30 26" fill="none" stroke="#777" strokeWidth="1.2">
        <path d="M1 1h28v22H1zM15 1v22" />
        <path d="M17 12l4 5 6-12" strokeWidth="2" />
      </svg>
      <span className="ml-[35px] w-[210px] shrink-0">Deutsch (Deutschland)</span>
      <svg className="ml-[38px] shrink-0" width="26" height="32" viewBox="0 0 26 32">
        <circle cx="6" cy="5" r="5" fill="#333" />
        <rect x="6" y="2" width="20" height="7" fill="#333" />
        <rect x="1" y="10" width="24" height="21" fill="#fff" stroke="#444" strokeWidth="1.4" />
        <path d="M5 15h16M5 19h16M5 23h16M5 27h16" stroke="#555" strokeWidth="1.4" strokeDasharray="3 1" />
      </svg>
      <svg className="ml-[39px] shrink-0" width="30" height="36" viewBox="0 0 30 36" fill="none" stroke="#444" strokeWidth="1.8">
        <path d="M12 3A12 12 0 0 0 5 24" strokeDasharray="4 2" />
        <path d="M14 1v14M10 10l4 5 4-5" />
        <path d="M17 18h7M21 15v6" />
        <path d="M12 27l5 7 5-11" strokeWidth="2.400" />
      </svg>
      <span className="ml-[2px] w-[291px] shrink-0 text-[19.4px]">Barrierefreiheit: Keine Probleme</span>
      <svg className="ml-[1270px] shrink-0" width="26" height="24" viewBox="0 0 26 24" fill="none" stroke="#777" strokeWidth="1.2">
        <path d="M1 1h24v22H1zM13 1v22M4 6h6M4 10h6M4 14h6M4 18h6M16 6h6M16 10h6M16 14h6M16 18h6" />
      </svg>
      <div className="ml-[27px] w-[80px] h-[42px] bg-[#c6c6c6] flex items-center justify-center shrink-0">
        <svg width="26" height="24" viewBox="0 0 26 24" fill="none" stroke="#666" strokeWidth="1.200">
          <path d="M1 1h24v22H1zM4 5h18M4 9h18M4 13h18M4 17h18M4 20h18" />
        </svg>
      </div>
      <svg className="ml-[27px] shrink-0" width="28" height="28" viewBox="0 0 28 28">
        <path d="M1 1h18l4 4v10M1 1v22h10" fill="none" stroke="#777" strokeWidth="1.200" />
        <path d="M5 7h12M5 11h12M5 15h8" stroke="#777" strokeWidth="1.200" />
        <circle cx="20" cy="20" r="7.500" fill="#777" />
      </svg>
      <span className="ml-[39px] w-[15px] h-[1.5px] bg-[#555] shrink-0" />
      <div className="ml-[11px] w-[198px] h-[2px] bg-[#333] relative shrink-0">
        <span className="absolute left-[98px] -top-[10px] w-[9px] h-[22px] bg-[#444]" />
      </div>
      <div className="ml-[11px] w-[15px] h-[15px] relative shrink-0">
        <span className="absolute left-0 top-[6.500px] w-[15px] h-[1.5px] bg-[#555]" />
        <span className="absolute top-0 left-[6.500px] w-[1.5px] h-[15px] bg-[#555]" />
      </div>
      <span className="ml-[27px]">110 %</span>
    </div>
  );
}

export default function App() {
  return (
    <div className="w-[2887px] h-[1808px] bg-[#2b579a] flex flex-col overflow-hidden font-['Open_Sans','Noto_Sans',sans-serif]">
      <TitleBar />
      <TabsRow />
      <Ribbon />
      <div className="h-[2px] mx-[3px] bg-[#c6c6c6] shrink-0" />
      <div className="flex-1 mx-[3px] flex min-h-0 bg-[#e6e6e6]">
        <NavPanel />
        <div className="w-[2px] bg-[#c6c6c6] shrink-0" />
        <div className="w-[1641px] shrink-0 flex flex-col">
          <div className="h-[47px] flex shrink-0 pt-[5px]">
            <div className="w-[38px] h-[38px] ml-[2px] -mt-[1px] bg-white border-2 border-[#eeeeee] flex items-center justify-center shrink-0">
              <svg width="16" height="12" viewBox="0 0 16 12">
                <path d="M2 0v10h13" fill="none" stroke="#555" strokeWidth="3" />
              </svg>
            </div>
            <div className="ml-[6px]">
              <HRuler />
            </div>
          </div>
          <div className="flex-1 flex min-h-0">
            <div className="w-[46px] pl-[4px] shrink-0 overflow-hidden">
              <VRuler />
            </div>
            <DocArea />
          </div>
        </div>
        <StylePanel />
      </div>
      <div className="h-[3px] mx-[3px] bg-[#c6c6c6] shrink-0" />
      <StatusBar />
    </div>
  );
}
